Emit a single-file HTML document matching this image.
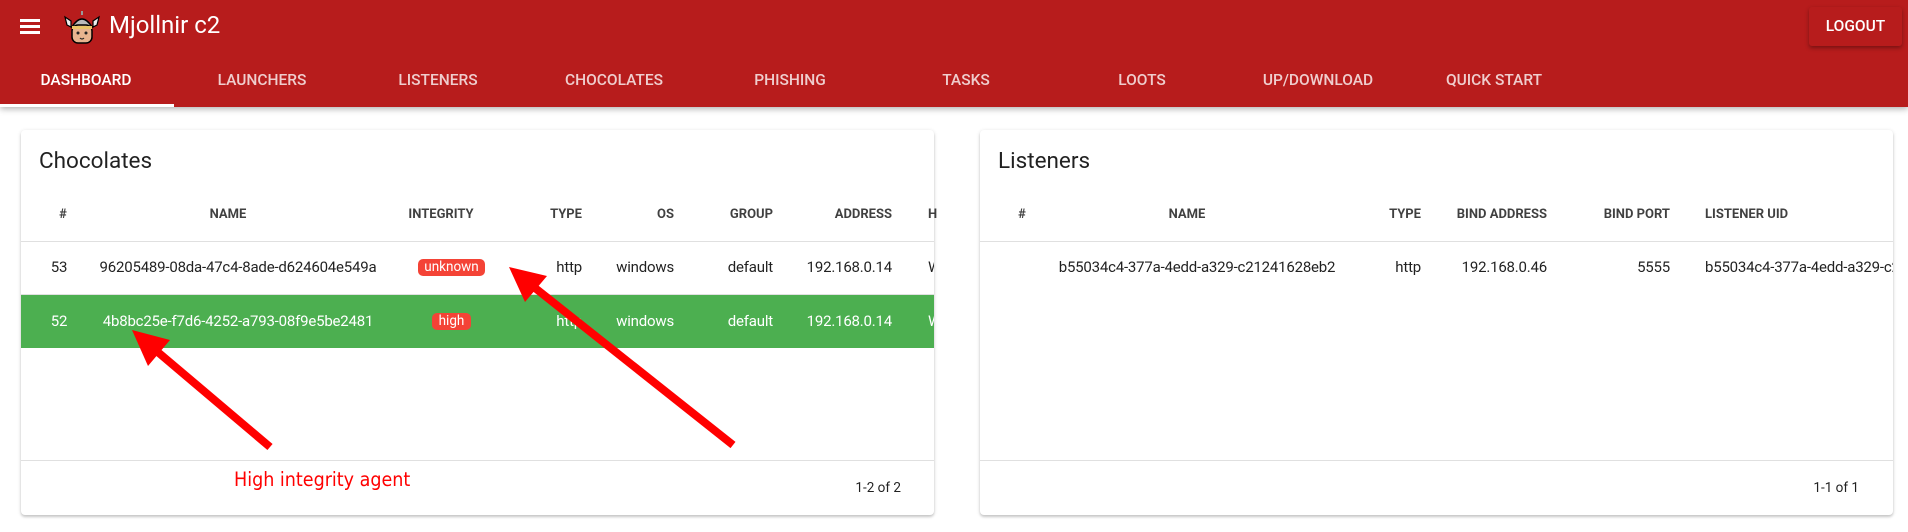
<!DOCTYPE html>
<html><head><meta charset="utf-8"><style>
*{margin:0;padding:0;box-sizing:border-box}
body{width:1908px;height:532px;overflow:hidden;background:#fff;font-family:"Roboto","Liberation Sans",sans-serif;position:relative;color:rgba(0,0,0,.87)}
.a{position:absolute;white-space:nowrap}
.bar{position:absolute;left:0;top:0;width:1908px;height:107px;background:#b71c1c;box-shadow:0 2px 6px rgba(0,0,0,.3)}
.tab{position:absolute;top:71px;width:176px;text-align:center;color:rgba(255,255,255,.78);font-size:15.5px;font-weight:500;line-height:18px;white-space:nowrap}
.card{position:absolute;top:130px;height:385px;background:#fff;border-radius:4px;box-shadow:0 2px 2px rgba(0,0,0,.14),0 1px 4px rgba(0,0,0,.14);overflow:hidden}
.th{position:absolute;top:207px;font-size:13px;font-weight:700;color:rgba(0,0,0,.75);line-height:16px;white-space:nowrap}
.td{position:absolute;font-size:15px;line-height:18px;white-space:nowrap;letter-spacing:-0.2px}
.line{position:absolute;height:1px;background:#e0e0e0}
.chip{position:absolute;background:#f44336;color:#fff;border-radius:5px;font-size:13.5px;text-align:center;line-height:17px;height:17px;white-space:nowrap}
</style></head><body>
<div class="bar"></div>
<div class="a" style="left:20px;top:19px;width:20px;height:3px;background:#fff"></div>
<div class="a" style="left:20px;top:25px;width:20px;height:3px;background:#fff"></div>
<div class="a" style="left:20px;top:31px;width:20px;height:3px;background:#fff"></div>
<svg class="a" style="left:63px;top:9px" width="38" height="36" viewBox="0 0 38 36">
<path d="M2 8 L8 12 L8 18 L4 16Z M36 8 L30 12 L30 18 L34 16Z" fill="#eee" stroke="#000" stroke-width="1.2"/>
<path d="M9 18 Q19 2 29 18Z" fill="#bbb" stroke="#000" stroke-width="1.5"/>
<rect x="18" y="2" width="2" height="4" fill="#999"/>
<rect x="9" y="16" width="20" height="18" rx="6" fill="#e8b48f" stroke="#000" stroke-width="1.5"/>
<path d="M9 17 H29 V20 H9Z" fill="#e9c468"/>
<circle cx="15" cy="24" r="1.5" fill="#222"/><circle cx="23" cy="24" r="1.5" fill="#222"/>
<path d="M17 29 Q19 31 21 29" stroke="#222" fill="none" stroke-width="1.2"/>
</svg>
<div class="a" style="left:109px;top:10px;font-size:24px;color:#fff;line-height:30px">Mjollnir c2</div>
<div class="a" style="left:1809px;top:7px;width:93px;height:39px;background:#b71c1c;box-shadow:0 2px 4px rgba(0,0,0,.35);border-radius:3px;color:#fff;font-size:15.5px;font-weight:500;text-align:center;line-height:39px">LOGOUT</div>
<div class="tab" style="left:-2px;color:#fff">DASHBOARD</div>
<div class="tab" style="left:174px">LAUNCHERS</div>
<div class="tab" style="left:350px">LISTENERS</div>
<div class="tab" style="left:526px">CHOCOLATES</div>
<div class="tab" style="left:702px">PHISHING</div>
<div class="tab" style="left:878px">TASKS</div>
<div class="tab" style="left:1054px">LOOTS</div>
<div class="tab" style="left:1230px">UP/DOWNLOAD</div>
<div class="tab" style="left:1406px">QUICK START</div>
<div class="a" style="left:0;top:104px;width:174px;height:3px;background:#fff"></div>

<div class="card" style="left:21px;width:913px"></div>
<div class="card" style="left:980px;width:913px"></div>

<div class="a" style="left:39px;top:147px;font-size:22.5px;line-height:28px">Chocolates</div>
<div class="a" style="left:998px;top:147px;font-size:22.5px;line-height:28px">Listeners</div>

<div style="position:absolute;left:21px;top:130px;width:913px;height:385px;overflow:hidden">
<div class="line" style="left:0;top:111px;width:913px"></div>
<div class="a" style="left:0;top:165px;width:913px;height:53px;background:#4caf50"></div>
<div class="line" style="left:0;top:164px;width:913px"></div>
<div class="line" style="left:0;top:330px;width:913px"></div>
</div>
<div class="th" style="left:43px;width:40px;text-align:center">#</div>
<div class="th" style="left:168px;width:120px;text-align:center">NAME</div>
<div class="th" style="left:391px;width:100px;text-align:center">INTEGRITY</div>
<div class="th" style="left:482px;width:100px;text-align:right">TYPE</div>
<div class="th" style="left:574px;width:100px;text-align:right">OS</div>
<div class="th" style="left:673px;width:100px;text-align:right">GROUP</div>
<div class="th" style="left:792px;width:100px;text-align:right">ADDRESS</div>
<div class="th" style="left:928px">H</div>

<div class="td" style="left:39px;top:258px;width:40px;text-align:center">53</div>
<div class="td" style="left:98px;top:258px;width:280px;text-align:center">96205489-08da-47c4-8ade-d624604e549a</div>
<div class="chip" style="left:418px;top:259px;width:67px">unknown</div>
<div class="td" style="left:482px;top:258px;width:100px;text-align:right">http</div>
<div class="td" style="left:574px;top:258px;width:100px;text-align:right">windows</div>
<div class="td" style="left:673px;top:258px;width:100px;text-align:right">default</div>
<div class="td" style="left:792px;top:258px;width:100px;text-align:right">192.168.0.14</div>
<div class="td" style="left:928px;top:258px;width:6px;overflow:hidden">W</div>

<div class="td" style="left:39px;top:312px;width:40px;text-align:center;color:#fff">52</div>
<div class="td" style="left:98px;top:312px;width:280px;text-align:center;color:#fff">4b8bc25e-f7d6-4252-a793-08f9e5be2481</div>
<div class="chip" style="left:432px;top:313px;width:39px">high</div>
<div class="td" style="left:482px;top:312px;width:100px;text-align:right;color:#fff">http</div>
<div class="td" style="left:574px;top:312px;width:100px;text-align:right;color:#fff">windows</div>
<div class="td" style="left:673px;top:312px;width:100px;text-align:right;color:#fff">default</div>
<div class="td" style="left:792px;top:312px;width:100px;text-align:right;color:#fff">192.168.0.14</div>
<div class="td" style="left:928px;top:312px;width:6px;overflow:hidden;color:#fff">W</div>

<div class="a" style="left:801px;top:480px;width:100px;text-align:right;font-size:13.5px;line-height:16px">1-2 of 2</div>

<div class="line" style="left:980px;top:241px;width:913px"></div>
<div class="line" style="left:980px;top:460px;width:913px"></div>
<div class="th" style="left:1002px;width:40px;text-align:center">#</div>
<div class="th" style="left:1127px;width:120px;text-align:center">NAME</div>
<div class="th" style="left:1321px;width:100px;text-align:right">TYPE</div>
<div class="th" style="left:1427px;width:120px;text-align:right">BIND ADDRESS</div>
<div class="th" style="left:1570px;width:100px;text-align:right">BIND PORT</div>
<div class="th" style="left:1705px">LISTENER UID</div>
<div class="td" style="left:1057px;top:258px;width:280px;text-align:center">b55034c4-377a-4edd-a329-c21241628eb2</div>
<div class="td" style="left:1321px;top:258px;width:100px;text-align:right">http</div>
<div class="td" style="left:1427px;top:258px;width:120px;text-align:right">192.168.0.46</div>
<div class="td" style="left:1570px;top:258px;width:100px;text-align:right">5555</div>
<div class="td" style="left:1705px;top:258px;width:188px;overflow:hidden">b55034c4-377a-4edd-a329-c21241628eb2</div>
<div class="a" style="left:1759px;top:480px;width:100px;text-align:right;font-size:13.5px;line-height:16px">1-1 of 1</div>

<svg class="a" style="left:0;top:0" width="1908" height="532">
<line x1="733" y1="445" x2="530" y2="284" stroke="#f00" stroke-width="8"/>
<polygon points="509,267 525,302 547,276" fill="#f00"/>
<line x1="270" y1="447" x2="153" y2="348" stroke="#f00" stroke-width="8"/>
<polygon points="132,330 148,366 170,340" fill="#f00"/>
</svg>
<div class="a" style="left:234px;top:468px;font-size:19.5px;color:#f00;line-height:24px;font-family:'DejaVu Sans Condensed','Liberation Sans',sans-serif">High integrity agent</div>
</body></html>
